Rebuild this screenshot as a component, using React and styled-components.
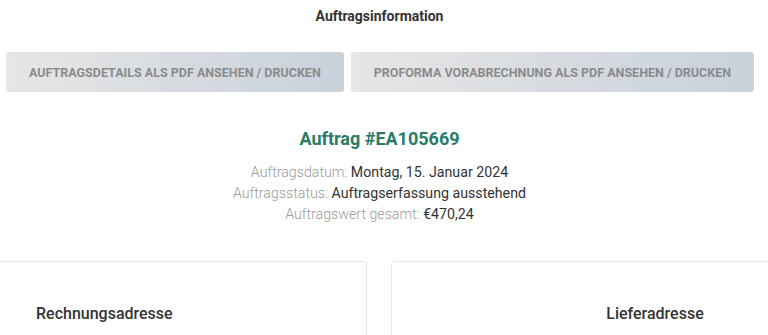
import React from "react";
import styled, { createGlobalStyle } from "styled-components";

const GlobalStyle = createGlobalStyle`
  html, body {
    margin: 0;
    padding: 0;
    background: #fff;
    overflow: hidden;
  }
  body {
    font-family: Roboto, "Liberation Sans", Arial, sans-serif;
    color: #333;
  }
`;

const Page = styled.div`
  width: 768px;
  height: 335px;
  overflow: hidden;
`;

const Content = styled.div`
  width: 759px;
`;

const Heading = styled.h2`
  margin: 0;
  padding-top: 6px;
  font-size: 14px;
  line-height: 20px;
  font-weight: 700;
  text-align: center;
  color: #333;
`;

const ButtonRow = styled.div`
  display: flex;
  gap: 7px;
  margin-top: 26px;
  padding-left: 6px;
`;

const PdfButton = styled.button`
  height: 40px;
  padding: 0 23px;
  border: 0;
  border-radius: 3px;
  background: linear-gradient(to right, #e6e6e6, #c9d1db);
  color: #8b8b8b;
  font-family: inherit;
  font-size: 12.5px;
  font-weight: 700;
  text-transform: uppercase;
  white-space: nowrap;
  cursor: pointer;
`;

const OrderTitle = styled.h1`
  margin: 35px 0 0;
  font-size: 18px;
  line-height: 24px;
  font-weight: 700;
  text-align: center;
  color: #287b69;
`;

const Details = styled.div`
  margin-top: 11px;
  text-align: center;
  font-size: 14.2px;
  line-height: 21px;
`;

const Label = styled.span`
  color: #9a9a9a;
  font-weight: 300;
`;

const Value = styled.span`
  color: #333;
`;

const Cards = styled.div`
  display: grid;
  grid-template-columns: 377px 528px;
  gap: 24px;
  margin-top: 36px;
  margin-left: -10px;
`;

const Card = styled.div`
  border: 1px solid #e8e8e8;
  border-radius: 4px;
  height: 120px;
  padding: 40px 0 0 ${(p) => (p.$center ? "0" : "45px")};
  text-align: ${(p) => (p.$center ? "center" : "left")};
`;

const CardTitle = styled.h3`
  margin: 0;
  font-size: 16px;
  line-height: 24px;
  font-weight: 500;
  color: #333;
`;

const rows = [
  ["Auftragsdatum:", "Montag, 15. Januar 2024"],
  ["Auftragsstatus:", "Auftragserfassung ausstehend"],
  ["Auftragswert gesamt:", "€470,24"],
];

export default function App() {
  return (
    <Page>
      <GlobalStyle />
      <Content>
        <Heading>Auftragsinformation</Heading>
        <ButtonRow>
          <PdfButton>Auftragsdetails als PDF ansehen / drucken</PdfButton>
          <PdfButton>Proforma Vorabrechnung als PDF ansehen / drucken</PdfButton>
        </ButtonRow>
        <OrderTitle>Auftrag #EA105669</OrderTitle>
        <Details>
          {rows.map(([label, value]) => (
            <div key={label}>
              <Label>{label}</Label> <Value>{value}</Value>
            </div>
          ))}
        </Details>
      </Content>
      <Cards>
        <Card>
          <CardTitle>Rechnungsadresse</CardTitle>
        </Card>
        <Card $center>
          <CardTitle>Lieferadresse</CardTitle>
        </Card>
      </Cards>
    </Page>
  );
}
